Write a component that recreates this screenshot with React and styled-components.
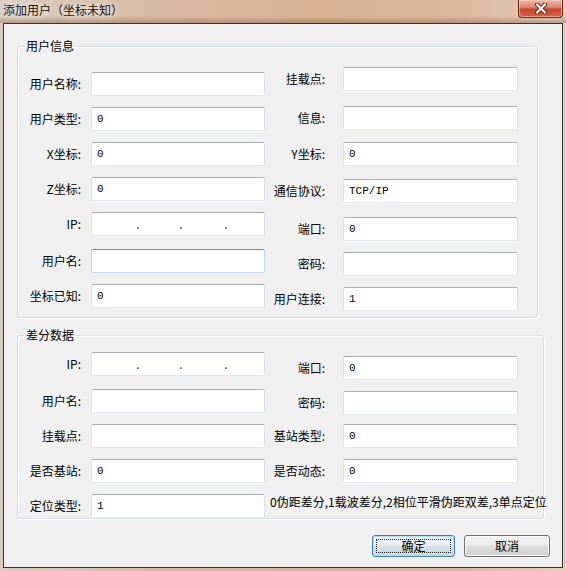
import React from 'react';
import styled, { createGlobalStyle, css } from 'styled-components';

const Global = createGlobalStyle`
  html, body { margin: 0; padding: 0; }
  body {
    width: 566px; height: 571px; overflow: hidden;
    font-family: "Noto Sans CJK SC", "Noto Sans", sans-serif;
    font-size: 12px; color: #000;
  }
`;

const Window = styled.div`
  width: 566px; height: 571px; box-sizing: border-box;
  display: flex; flex-direction: column;
  padding: 0 3px 3px 3px;
  background: linear-gradient(90deg, #d9cbc0 0%, #d8bba5 25%, #dab395 55%, #dcb79b 80%, #e4cebd 100%);
`;

const TitleBar = styled.div`
  height: 23px; display: flex; align-items: flex-start;
  margin: 0 -3px; padding: 0 3px;
  background: linear-gradient(180deg, rgba(255,255,255,0) 0%, rgba(255,255,255,0) 70%, rgba(110,70,45,0.35) 100%);
`;

const Title = styled.div`
  line-height: 20px; font-size: 12px; color: #111;
  text-shadow: 0 0 6px rgba(255,255,255,0.9), 0 0 10px rgba(255,255,255,0.7);
`;

const CloseButton = styled.div`
  margin-left: auto; width: 45px; height: 18px; box-sizing: border-box;
  border: 1px solid #6a2a1c; border-top: none; border-radius: 0 0 4px 4px;
  background: linear-gradient(180deg, #ecb7a8 0%, #e08a72 40%, #c9452d 55%, #d2654c 100%);
  box-shadow: inset 0 0 0 1px rgba(255, 210, 195, 0.55);
  display: flex; align-items: center; justify-content: center;
`;

const Client = styled.div`
  flex: 1; display: flex; flex-direction: column;
  border: 1px solid #3e3128; background: #f0f0f0;
  padding: 15px 0 0 13px;
`;

const Group = styled.fieldset`
  margin: ${p => p.$mt || 0}px 0 0 0;
  padding: ${p => p.$pt}px 0 ${p => p.$pb}px 0;
  width: ${p => p.$w}px; box-sizing: border-box; min-width: 0;
  border: 1px solid #d5dfe5; border-radius: 3px;
  box-shadow: inset 1px 1px 0 #fff, 1px 1px 0 #fff;
`;

const Legend = styled.legend`
  padding: 0 2px; margin-left: 6px;
  line-height: 14px; font-size: 12px; color: #000;
`;

const Rows = styled.div`
  display: flex; flex-direction: column; gap: 11px;
`;

const Row = styled.div`
  display: flex; align-items: flex-start; height: 24px;
  margin-top: ${p => p.$mt || 0}px;
`;

const Field = styled.div`
  display: flex; align-items: center;
  margin-top: ${p => p.$dy || 0}px;
`;

const Label = styled.label`
  width: ${p => p.$w}px; box-sizing: border-box;
  padding-right: ${p => p.$pr}px;
  text-align: right; white-space: nowrap;
  line-height: 14px; font-size: 12px; color: #000;
`;

const TextBox = styled.div`
  width: ${p => p.$w}px; height: 24px; box-sizing: border-box;
  border: 1px solid; border-color: #abadb3 #dbdfe6 #e3e9ef #e2e3ea;
  border-radius: 2px; background: #fff;
  padding: 0 5px; display: flex; align-items: center;
  font-family: "Liberation Mono", "DejaVu Sans Mono", monospace;
  font-size: 11px; line-height: 14px; color: #000;
  ${p => p.$hover && css`border-color: #5c93bc #b9d6ea #c5dcec #b9d6ea;`}
`;

const IpBox = styled(TextBox)`
  padding: 0;
`;

const IpSeg = styled.span`
  width: ${p => p.$w}px; flex: ${p => (p.$w ? '0 0 auto' : 1)};
`;

const IpDot = styled.span`
  width: 2px; display: flex; justify-content: center;
  font-family: "Noto Sans CJK SC", sans-serif; font-size: 12px; color: #333;
  line-height: 14px;
`;

const Note = styled.div`
  margin: 1px 0 0 5px; line-height: 14px; font-size: 12px; white-space: nowrap; color: #000;
`;

const ButtonBar = styled.div`
  display: flex; justify-content: flex-end; gap: 9px;
  margin: 16px 12px 0 0;
`;

const Button = styled.div`
  width: ${p => p.$w}px; height: 22px; box-sizing: border-box;
  border: 1px solid #707070; border-radius: 3px;
  background: linear-gradient(180deg, #f3f3f3 0%, #ebebeb 46%, #dddddd 52%, #cfcfcf 100%);
  box-shadow: inset 0 0 0 1px #fbfbfb;
  display: flex; align-items: center; justify-content: center;
  font-size: 12px; line-height: 14px; color: #000;
  ${p => p.$default && css`
    border-color: #3c7fb1;
    box-shadow: inset 0 0 0 1px #b4e1f6;
    background: linear-gradient(180deg, #eef6fa 0%, #e6eef3 46%, #d5e0e7 52%, #cbd6de 100%);
  `}
`;

const FocusRing = styled.span`
  width: calc(100% - 6px); height: calc(100% - 6px); box-sizing: border-box;
  border: 1px dotted #222;
  display: flex; align-items: center; justify-content: center;
`;

const L = { w: 73, pr: 10 };
const R = { w: 78, pr: 18 };

function Input({ label, value, side = 'left', dy, hover }) {
  const s = side === 'left' ? L : R;
  return (
    <Field $dy={dy}>
      <Label $w={s.w} $pr={s.pr}>{label}</Label>
      <TextBox $w={side === 'left' ? 174 : 175} $hover={hover}>{value}</TextBox>
    </Field>
  );
}

function IpInput({ label }) {
  return (
    <Field>
      <Label $w={L.w} $pr={L.pr}>{label}</Label>
      <IpBox $w={174}>
        <IpSeg $w={45} /><IpDot>.</IpDot>
        <IpSeg $w={41} /><IpDot>.</IpDot>
        <IpSeg $w={43} /><IpDot>.</IpDot>
        <IpSeg />
      </IpBox>
    </Field>
  );
}

function CloseIcon() {
  return (
    <svg width="14" height="11" viewBox="0 0 14 11">
      <path d="M3 1.5 L11 9.5 M11 1.5 L3 9.5" stroke="#5a2418" strokeWidth="4" strokeLinecap="round" />
      <path d="M3 1.5 L11 9.5 M11 1.5 L3 9.5" stroke="#ffffff" strokeWidth="2.2" strokeLinecap="round" />
    </svg>
  );
}

export default function App() {
  return (
    <>
      <Global />
      <Window>
        <TitleBar>
          <Title>添加用户（坐标未知）</Title>
          <CloseButton><CloseIcon /></CloseButton>
        </TitleBar>
        <Client>
          <Group $w={521} $pt={19} $pb={9}>
            <Legend>用户信息</Legend>
            <Rows>
              <Row>
                <Input label="用户名称:" value="" />
                <Input label="挂载点:" value="" side="right" dy={-5} />
              </Row>
              <Row>
                <Input label="用户类型:" value="0" />
                <Input label="信息:" value="" side="right" dy={-1} />
              </Row>
              <Row>
                <Input label="X坐标:" value="0" />
                <Input label="Y坐标:" value="0" side="right" />
              </Row>
              <Row>
                <Input label="Z坐标:" value="0" />
                <Input label="通信协议:" value="TCP/IP" side="right" dy={2} />
              </Row>
              <Row>
                <IpInput label="IP:" />
                <Input label="端口:" value="0" side="right" dy={5} />
              </Row>
              <Row $mt={2}>
                <Input label="用户名:" value="" hover />
                <Input label="密码:" value="" side="right" dy={3} />
              </Row>
              <Row>
                <Input label="坐标已知:" value="0" />
                <Input label="用户连接:" value="1" side="right" dy={3} />
              </Row>
            </Rows>
          </Group>
          <Group $w={527} $mt={10} $pt={10} $pb={0}>
            <Legend>差分数据</Legend>
            <Rows>
              <Row>
                <IpInput label="IP:" />
                <Input label="端口:" value="0" side="right" dy={4} />
              </Row>
              <Row $mt={2}>
                <Input label="用户名:" value="" />
                <Input label="密码:" value="" side="right" dy={2} />
              </Row>
              <Row>
                <Input label="挂载点:" value="" />
                <Input label="基站类型:" value="0" side="right" />
              </Row>
              <Row>
                <Input label="是否基站:" value="0" />
                <Input label="是否动态:" value="0" side="right" />
              </Row>
              <Row>
                <Input label="定位类型:" value="1" />
                <Note>0伪距差分,1载波差分,2相位平滑伪距双差,3单点定位</Note>
              </Row>
            </Rows>
          </Group>
          <ButtonBar>
            <Button $w={83} $default><FocusRing>确定</FocusRing></Button>
            <Button $w={86}>取消</Button>
          </ButtonBar>
        </Client>
      </Window>
    </>
  );
}
